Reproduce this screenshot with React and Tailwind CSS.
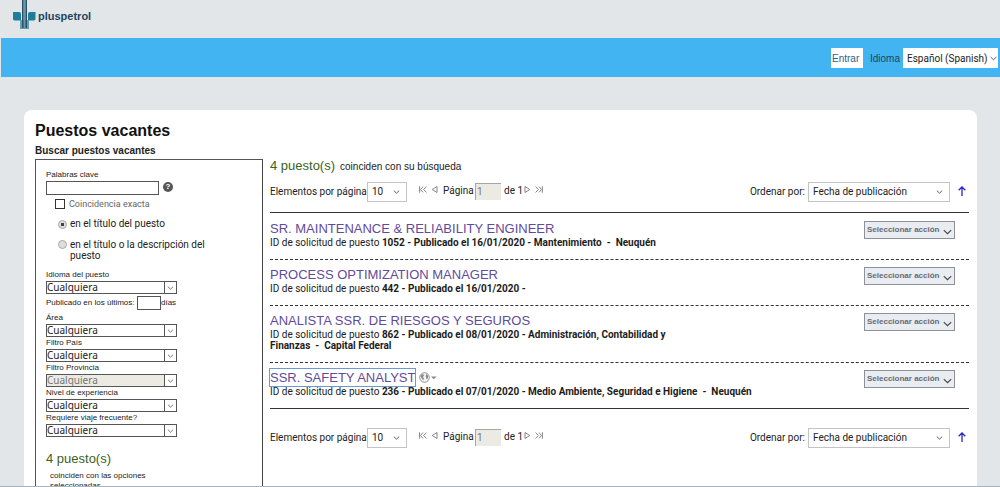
import { useId } from "react";

const jobs = [
  {
    title: "SR. MAINTENANCE & RELIABILITY ENGINEER",
    id: "1052",
    lines: ["Publicado el 16/01/2020 - Mantenimiento\u00a0 -\u00a0 Neuquén"],
  },
  {
    title: "PROCESS OPTIMIZATION MANAGER",
    id: "442",
    lines: ["Publicado el 16/01/2020 -"],
  },
  {
    title: "ANALISTA SSR. DE RIESGOS Y SEGUROS",
    id: "862",
    lines: [
      "Publicado el 08/01/2020 - Administración, Contabilidad y",
      "Finanzas\u00a0 -\u00a0 Capital Federal",
    ],
  },
  {
    title: "SSR. SAFETY ANALYST",
    id: "236",
    lines: [
      "Publicado el 07/01/2020 - Medio Ambiente, Seguridad e Higiene\u00a0 -\u00a0 Neuquén",
    ],
    focused: true,
  },
];

function Chevron({ className }) {
  return (
    <svg viewBox="0 0 8 5" fill="none" stroke="currentColor" className={className} aria-hidden="true">
      <path d="M0.7 0.8 L4 4 L7.3 0.8" />
    </svg>
  );
}

function Logo() {
  return (
    <a href="#" className="flex items-start">
      <svg viewBox="0 0 23 29" className="h-[29px] w-[23px]" aria-hidden="true">
        <path d="M0 12 H6 Q8 12.200 8 14 V20.500 H1.500 Q0 20.300 0 19Z" fill="#1f7d9c" />
        <path d="M22.500 12 H17 Q15 12.200 15 14 V20.500 H21 Q22.500 20.300 22.500 19Z" fill="#1f7d9c" />
        <path d="M7 20 H16 V29 H7Z" fill="#5d9fb5" />
        <path d="M9 0 H10.700 V28 H9Z M12.300 0 H14 V28 H12.300Z" fill="#2c4f68" />
        <path d="M10.700 0 H12.300 V28 H10.700Z" fill="#6f93a6" />
      </svg>
      <span className="mt-2 ml-[2px] text-[11px] leading-4 font-bold text-[#1d4560]">pluspetrol</span>
    </a>
  );
}

function FilterSelect({ label, disabled }) {
  const id = useId();
  return (
    <div className="flex flex-col">
      <label htmlFor={id} className="text-[8px] leading-3">{label}</label>
      <div className="grid w-[131px] grid-cols-[1fr_12px] border border-[#555]">
        <select
          id={id}
          disabled={disabled}
          className="col-span-2 col-start-1 row-start-1 h-[11px] appearance-none bg-white font-['Noto_Sans',sans-serif] text-[10px] leading-[11px] text-[#222] disabled:bg-[#ebebe4] disabled:text-[#777] disabled:opacity-100"
        >
          <option>Cualquiera</option>
        </select>
        <span className="pointer-events-none col-start-2 row-start-1 flex items-center justify-center border-l border-[#555] bg-white text-[#555]">
          <Chevron className="h-1 w-[7px]" />
        </span>
      </div>
    </div>
  );
}

function BoxSelect({ id, value, className }) {
  return (
    <div className={"grid h-5 items-center border border-[#c4c4c4] bg-white " + className}>
      <select
        id={id}
        className="col-start-1 row-start-1 h-full w-full appearance-none bg-transparent pl-1 font-['Roboto',sans-serif] text-[10px] text-[#222]"
      >
        <option>{value}</option>
      </select>
      <Chevron className="pointer-events-none col-start-1 row-start-1 mr-[6px] h-1 w-[7px] justify-self-end text-[#333]" />
    </div>
  );
}

function NavIcon({ label, last, edge }) {
  return (
    <button type="button" aria-label={label} className="text-[#777]">
      <svg viewBox="0 0 8 7" fill="none" stroke="currentColor" strokeWidth="0.9" className={last ? "h-[7px] w-2 rotate-180" : "h-[7px] w-2"}>
        {edge ? <path d="M0.6 0.3 V6.700 M4 0.600 L1.600 3.500 L4 6.400 M7.400 0.600 L4.600 3.500 L7.400 6.400" /> : <path d="M6 0.500 V6.500 L1.200 3.500Z" />}
      </svg>
    </button>
  );
}

function Toolbar() {
  const perPage = useId();
  const page = useId();
  const order = useId();
  return (
    <div className="flex h-5 items-center font-['Roboto',sans-serif] text-[10px] leading-3 text-[#222]">
      <label htmlFor={perPage} className="w-[97px] whitespace-nowrap">Elementos por página</label>
      <BoxSelect id={perPage} value="10" className="w-10" />
      <div className="mb-[2px] ml-3 flex items-center">
        <span className="mb-1 flex items-center gap-1">
          <NavIcon label="Primera página" edge />
          <NavIcon label="Página anterior" />
        </span>
        <label htmlFor={page} className="ml-1 w-8">Página</label>
        <input
          id={page}
          defaultValue="1"
          disabled
          className="h-[17px] w-[26px] border-t border-l border-[#a5a5a5] bg-[#ebebe4] pl-px text-[10px] text-[#777]"
        />
        <span className="ml-[3px]">de 1</span>
        <span className="mb-1 flex items-center gap-1">
          <NavIcon label="Página siguiente" last />
          <NavIcon label="Última página" last edge />
        </span>
      </div>
      <label htmlFor={order} className="mr-[3px] ml-auto">Ordenar por:</label>
      <BoxSelect id={order} value="Fecha de publicación" className="w-[142px]" />
      <button type="button" aria-label="Orden ascendente" className="mr-[3px] mb-[2px] ml-2 text-[#2a22c8]">
        <svg viewBox="0 0 8 10" fill="none" stroke="currentColor" strokeWidth="1.300" className="h-[10px] w-2">
          <path d="M4 10 V1.200 M0.700 4.300 L4 1 L7.300 4.300" />
        </svg>
      </button>
    </div>
  );
}

function Job({ job }) {
  return (
    <li className="flex items-start border-b border-dashed border-[#333] pt-[6px] pb-[11px] last:border-solid">
      <div className="min-w-0 flex-1">
        <h2 className="flex items-center text-[13px] leading-[17px]">
          <a href="#" className={job.focused ? "text-[#5f4b9b] outline-1 outline-[#6a9bd0] outline-solid" : "text-[#5f4b9b]"}>
            {job.title}
          </a>
          {job.focused && (
            <button type="button" aria-label="Idiomas disponibles" className="ml-1 flex items-center text-[#888]">
              <svg viewBox="0 0 18 11" className="h-[11px] w-[18px]">
                <circle cx="5.500" cy="5.500" r="4.800" fill="#f4f4f4" stroke="currentColor" strokeWidth="0.900" />
                <path d="M1.500 3.500 L4 2 L5 3 L4 5 L5 6.500 L4 8.500 L3 6.500 L1.800 5Z M7 2 L9 3.500 L9 5.500 L8 7.500 L7 6 L6.800 4Z" fill="currentColor" />
                <path d="M12 4.500 H17.500 L14.750 7.300Z" fill="currentColor" />
              </svg>
            </button>
          )}
        </h2>
        <p className="font-['Roboto',sans-serif] text-[10px] leading-[11px] font-bold text-[#1c1c1c]">
          <span className="font-normal">ID de solicitud de puesto</span> {job.id} - {job.lines[0]}
          {job.lines[1] && (
            <>
              <br />
              {job.lines[1]}
            </>
          )}
        </p>
      </div>
      <button
        type="button"
        className="mt-px mr-[14px] flex h-[18px] w-[91px] items-center justify-between border border-[#8b909a] bg-[#e9ecf1] pr-[2px] pl-[2px] text-[8px] leading-3 font-bold whitespace-nowrap text-[#666b73]"
      >
        Seleccionar acción
        <Chevron className="mt-1 h-[6px] w-[9px] text-[#444]" />
      </button>
    </li>
  );
}

function Filters() {
  return (
    <form className="flex flex-1 flex-col border border-b-0 border-[#555] border-r-[#444] pt-[9px] pl-[10px] text-[#222]">
      <label htmlFor="keywords" className="text-[8px] leading-3">Palabras clave</label>
      <div className="flex items-center gap-1">
        <input id="keywords" type="text" className="h-[14px] w-[113px] border border-[#555] bg-white px-1 text-[10px]" />
        <button type="button" aria-label="Ayuda" className="mb-[2px] flex size-[10px] items-center justify-center rounded-full bg-[#555] text-[8px] leading-none font-bold text-white">
          ?
        </button>
      </div>
      <label className="mt-[3px] ml-[9px] flex items-center gap-1 font-['Roboto',sans-serif] text-[9px] leading-3 text-[#666]">
        <input type="checkbox" className="size-[10px] appearance-none border border-[#333] bg-white" />
        Coincidencia exacta
      </label>
      <label className="mt-2 ml-3 flex items-center gap-[3px] font-['Roboto',sans-serif] text-[10px] leading-3">
        <input type="radio" name="scope" defaultChecked className="size-[9px] appearance-none rounded-full border border-[#aaa] bg-[#ddd] checked:bg-[radial-gradient(circle,#444_30%,#ddd_40%)]" />
        en el título del puesto
      </label>
      <label className="mt-[9px] ml-3 flex items-start gap-[3px] font-['Roboto',sans-serif] text-[10px] leading-[11px]">
        <input type="radio" name="scope" className="mt-px size-[9px] appearance-none rounded-full border border-[#aaa] bg-[#ddd]" />
        <span className="w-[150px]">en el título o la descripción del puesto</span>
      </label>
      <div className="mt-2">
        <FilterSelect label="Idioma del puesto" />
      </div>
      <div className="my-[2px] flex items-center text-[8px] leading-3">
        <label htmlFor="days" className="w-[91px] whitespace-nowrap">Publicado en los últimos:</label>
        <input id="days" type="text" aria-label="Días desde la publicación" className="h-[14px] w-6 border border-[#555] bg-white text-[8px]" />
        <span>días</span>
      </div>
      <FilterSelect label="Área" />
      <FilterSelect label="Filtro País" />
      <FilterSelect label="Filtro Provincia" disabled />
      <FilterSelect label="Nivel de experiencia" />
      <FilterSelect label="Requiere viaje frecuente?" />
      <p className="mt-[14px] text-[13px] leading-4 text-[#3d5f22]">4 puesto(s)</p>
      <p className="mt-1 ml-1 w-[120px] text-[8px] leading-[10px]">coinciden con las opciones seleccionadas</p>
    </form>
  );
}

export default function App() {
  return (
    <div className="flex h-screen flex-col overflow-hidden border-b border-[#a9b4bc] bg-[#e2e6e9] font-['Liberation_Sans',Arial,sans-serif]">
      <header className="shrink-0">
        <div className="h-[38px] pl-[13px]">
          <Logo />
        </div>
        <nav className="ml-px flex h-[39px] items-center justify-end bg-[#42b4f2] pt-px pr-[2px] text-[10px]">
          <a href="#" className="flex h-5 w-8 items-center bg-white pl-px text-[#2f6187]">Entrar</a>
          <label htmlFor="language" className="ml-[7px] w-[33px] text-[#1d4560]">Idioma</label>
          <div className="grid h-5 w-[95px] items-center bg-white">
            <select id="language" className="col-start-1 row-start-1 h-full appearance-none bg-transparent pl-1 font-['Roboto',sans-serif] text-[10px] text-[#222]">
              <option>Español (Spanish)</option>
            </select>
            <Chevron className="pointer-events-none col-start-1 row-start-1 mr-px h-[5px] w-[7px] justify-self-end text-[#444]" />
          </div>
        </nav>
      </header>

      <main className="mt-[33px] mr-[23px] ml-6 flex flex-1 rounded-t-lg bg-white pr-2 pl-[11px]">
        <aside className="flex w-[228px] shrink-0 flex-col pt-[11px]">
          <h1 className="text-[16px] leading-5 font-bold text-[#111]">Puestos vacantes</h1>
          <h2 className="mt-1 mb-[2px] text-[10px] leading-3 font-bold text-[#222]">Buscar puestos vacantes</h2>
          <Filters />
        </aside>
        <section className="ml-[7px] min-w-0 flex-1 pt-12">
          <p className="mb-[7px] flex items-baseline gap-[5px] text-[10px] leading-4 text-[#222]">
            <span className="text-[13px] text-[#3d5f22]">4 puesto(s)</span>
            coinciden con su búsqueda
          </p>
          <Toolbar />
          <ul className="mt-[10px] mb-[19px] border-t border-[#333] pt-px">
            {jobs.map((job) => (
              <Job key={job.id} job={job} />
            ))}
          </ul>
          <Toolbar />
        </section>
      </main>
    </div>
  );
}
